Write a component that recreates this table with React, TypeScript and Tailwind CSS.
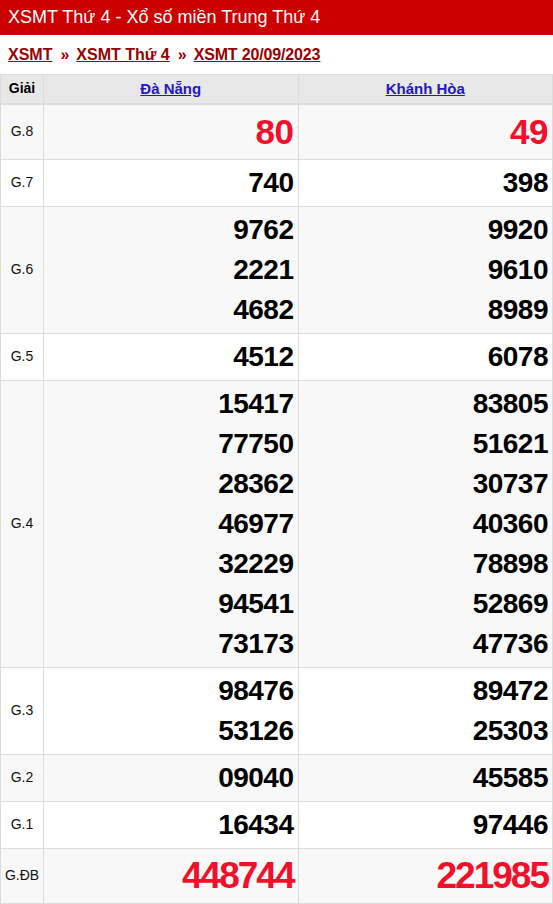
import React from "react";

type Row = { label: string; a: string[]; b: string[]; kind?: "g8" | "db" };

const rows: Row[] = [
  { label: "G.8", a: ["80"], b: ["49"], kind: "g8" },
  { label: "G.7", a: ["740"], b: ["398"] },
  { label: "G.6", a: ["9762", "2221", "4682"], b: ["9920", "9610", "8989"] },
  { label: "G.5", a: ["4512"], b: ["6078"] },
  {
    label: "G.4",
    a: ["15417", "77750", "28362", "46977", "32229", "94541", "73173"],
    b: ["83805", "51621", "30737", "40360", "78898", "52869", "47736"],
  },
  { label: "G.3", a: ["98476", "53126"], b: ["89472", "25303"] },
  { label: "G.2", a: ["09040"], b: ["45585"] },
  { label: "G.1", a: ["16434"], b: ["97446"] },
  { label: "G.ĐB", a: ["448744"], b: ["221985"], kind: "db" },
];

function Nums({ list, kind }: { list: string[]; kind?: "g8" | "db" }) {
  if (kind === "g8") {
    return (
      <div className="text-[35px] leading-[48px] font-bold text-[#f20f2a] tracking-[-0.5px]">
        {list.map((n) => (
          <div key={n}>{n}</div>
        ))}
      </div>
    );
  }
  if (kind === "db") {
    return (
      <div className="text-[37px] leading-[48px] font-bold text-[#f20f2a] tracking-[-2px]">
        {list.map((n) => (
          <div key={n}>{n}</div>
        ))}
      </div>
    );
  }
  return (
    <div className="text-[28px] leading-[40px] font-bold text-black tracking-[-0.5px]">
      {list.map((n) => (
        <div key={n}>{n}</div>
      ))}
    </div>
  );
}

export default function App() {
  return (
    <div
      className="w-[553px] bg-white"
      style={{ fontFamily: '"Liberation Sans", Arial, sans-serif' }}
    >
      <div className="h-[35px] bg-[#cc0000] px-[8px] flex items-center text-white text-[18px]">
        XSMT Thứ 4 - Xổ số miền Trung Thứ 4
      </div>
      <div className="h-[39px] px-[8px] flex items-center text-[16px] font-bold text-[#990000]">
        <a className="underline" href="#">XSMT</a>
        <span className="ml-[8px] mr-[7px]">»</span>
        <a className="underline" href="#">XSMT Thứ 4</a>
        <span className="ml-[8px] mr-[7px]">»</span>
        <a className="underline tracking-[-0.15px]" href="#">XSMT 20/09/2023</a>
      </div>
      <table className="w-full border-collapse table-fixed">
        <colgroup>
          <col className="w-[43px]" />
          <col />
          <col />
        </colgroup>
        <thead>
          <tr className="bg-[#e8e8e8] h-[29px]">
            <th className="border border-[#dcdcdc] border-b-2 text-[14px] font-bold text-black text-center p-0">
              Giải
            </th>
            <th className="border border-[#dcdcdc] border-b-2 text-[15px] font-bold text-center p-0">
              <a href="#" className="underline text-[#2414d0]">Đà Nẵng</a>
            </th>
            <th className="border border-[#dcdcdc] border-b-2 text-[15px] font-bold text-center p-0">
              <a href="#" className="underline text-[#2414d0]">Khánh Hòa</a>
            </th>
          </tr>
        </thead>
        <tbody>
          {rows.map((r, i) => (
            <tr key={r.label} className={i % 2 === 0 ? "bg-[#f8f8f8]" : "bg-white"}>
              <td className="border border-[#dcdcdc] text-center text-[14px] text-[#111] p-0 align-middle">
                {r.label}
              </td>
              <td className="border border-[#dcdcdc] text-right pt-[3px] pb-[3px] pr-[4px] align-middle">
                <Nums list={r.a} kind={r.kind} />
              </td>
              <td className="border border-[#dcdcdc] text-right pt-[3px] pb-[3px] pr-[4px] align-middle">
                <Nums list={r.b} kind={r.kind} />
              </td>
            </tr>
          ))}
        </tbody>
      </table>
    </div>
  );
}
